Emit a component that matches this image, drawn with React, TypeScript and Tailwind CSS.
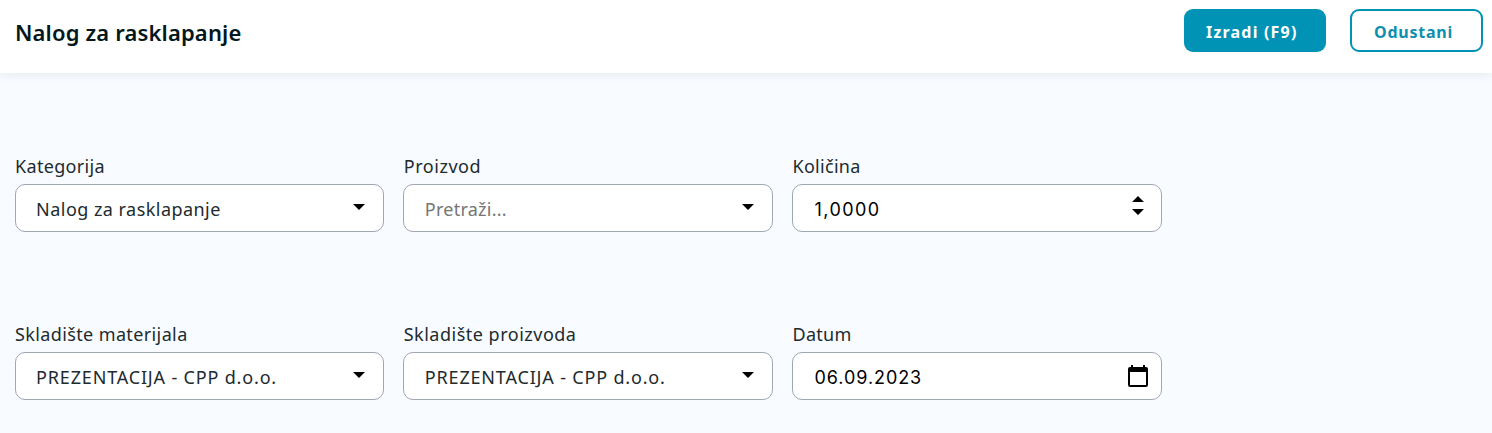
import type { ReactNode } from 'react';

const CaretDown = () => (
  <svg width="12" height="6" viewBox="0 0 12 6">
    <path d="M0 0h12L6 6z" />
  </svg>
);

const Spinner = () => (
  <svg width="12" height="19" viewBox="0 0 12 19">
    <path d="M0 6h12L6 0zM0 13h12l-6 6z" />
  </svg>
);

const CalendarIcon = () => (
  <svg width="20" height="22" viewBox="0 0 20 22">
    <path fillRule="evenodd" d="M3 0h2v2h10V0h2v2h1a2 2 0 0 1 2 2v16a2 2 0 0 1-2 2H2a2 2 0 0 1-2-2V4a2 2 0 0 1 2-2h1zM2 7v13h16V7z" />
  </svg>
);

const fields = [
  {
    label: 'Kategorija',
    labelClass: 'tracking-[0.33px]',
    value: 'Nalog za rasklapanje',
    valueClass: 'text-[#212b2e] tracking-[0.46px]',
    icon: <CaretDown />,
    iconClass: 'right-[18px] top-[19px]',
  },
  {
    label: 'Proizvod',
    labelClass: 'tracking-[0.55px]',
    value: 'Pretraži...',
    valueClass: 'text-[#757575] tracking-[0.25px]',
    icon: <CaretDown />,
    iconClass: 'right-[18px] top-[19px]',
  },
  {
    label: 'Količina',
    labelClass: 'tracking-[0.3px]',
    value: '1,0000',
    valueClass: "left-px text-black font-['Inter',sans-serif] tracking-[1.4px]",
    icon: <Spinner />,
    iconClass: 'right-[17px] top-[11px]',
  },
  {
    label: 'Skladište materijala',
    labelClass: 'tracking-[0.38px]',
    value: 'PREZENTACIJA - CPP d.o.o.',
    valueClass: 'text-[#212b2e] tracking-[0.83px]',
    icon: <CaretDown />,
    iconClass: 'right-[18px] top-[19px]',
  },
  {
    label: 'Skladište proizvoda',
    labelClass: 'tracking-[0.5px]',
    value: 'PREZENTACIJA - CPP d.o.o.',
    valueClass: 'text-[#212b2e] tracking-[0.83px]',
    icon: <CaretDown />,
    iconClass: 'right-[18px] top-[19px]',
  },
  {
    label: 'Datum',
    labelClass: 'tracking-[0.3px]',
    value: '06.09.2023',
    valueClass: "left-px text-black font-['Inter',sans-serif] tracking-[0.93px]",
    icon: <CalendarIcon />,
    iconClass: 'right-[13px] top-[12px]',
  },
];

type FieldProps = {
  label: string;
  labelClass: string;
  value: string;
  valueClass: string;
  icon: ReactNode;
  iconClass: string;
};

function Field({ label, labelClass, value, valueClass, icon, iconClass }: FieldProps) {
  return (
    <div>
      <div className="h-[30px] pl-[0.4px] text-[18px] leading-6 text-[#212b2e]">
        <span className={labelClass}>{label}</span>
      </div>
      <div className="relative flex h-12 items-center rounded-[10px] border border-[#a0a7b3] bg-white pl-[20.5px] text-[18px]">
        <span className={`relative top-px ${valueClass}`}>{value}</span>
        <span className={`absolute ${iconClass}`}>{icon}</span>
      </div>
    </div>
  );
}

export default function App() {
  return (
    <div className="h-[433px] w-full overflow-hidden bg-[#f8fbff] font-['Noto_Sans',sans-serif]">
      <header className="flex h-[73px] items-start justify-between bg-white pr-[9px] pl-[15px] shadow-[0_2px_10px_rgba(0,0,0,0.08)]">
        <h1 className="mt-[17px] text-[22px] leading-[30px] font-semibold tracking-[0.15px] text-[#04181c]">
          Nalog za rasklapanje
        </h1>
        <div className="mt-[9px] flex gap-6">
          <button className="h-[43px] w-[142px] rounded-[9px] bg-[#0093b5] pt-0.5 pl-[22px] text-left text-base font-bold tracking-[1.2px] text-white">
            Izradi (F9)
          </button>
          <button className="h-[43px] w-[133px] rounded-[9px] border-2 border-[#0093b5] pt-0.5 pl-[22px] text-left text-base font-bold tracking-[0.75px] text-[#0e8fb0]">
            Odustani
          </button>
        </div>
      </header>

      <main className="grid w-[1161.6px] grid-cols-3 gap-x-[19.2px] gap-y-[90px] pt-[81px] pl-[14.6px]">
        {fields.map((field) => (
          <Field key={field.label} {...field} />
        ))}
      </main>
    </div>
  );
}
